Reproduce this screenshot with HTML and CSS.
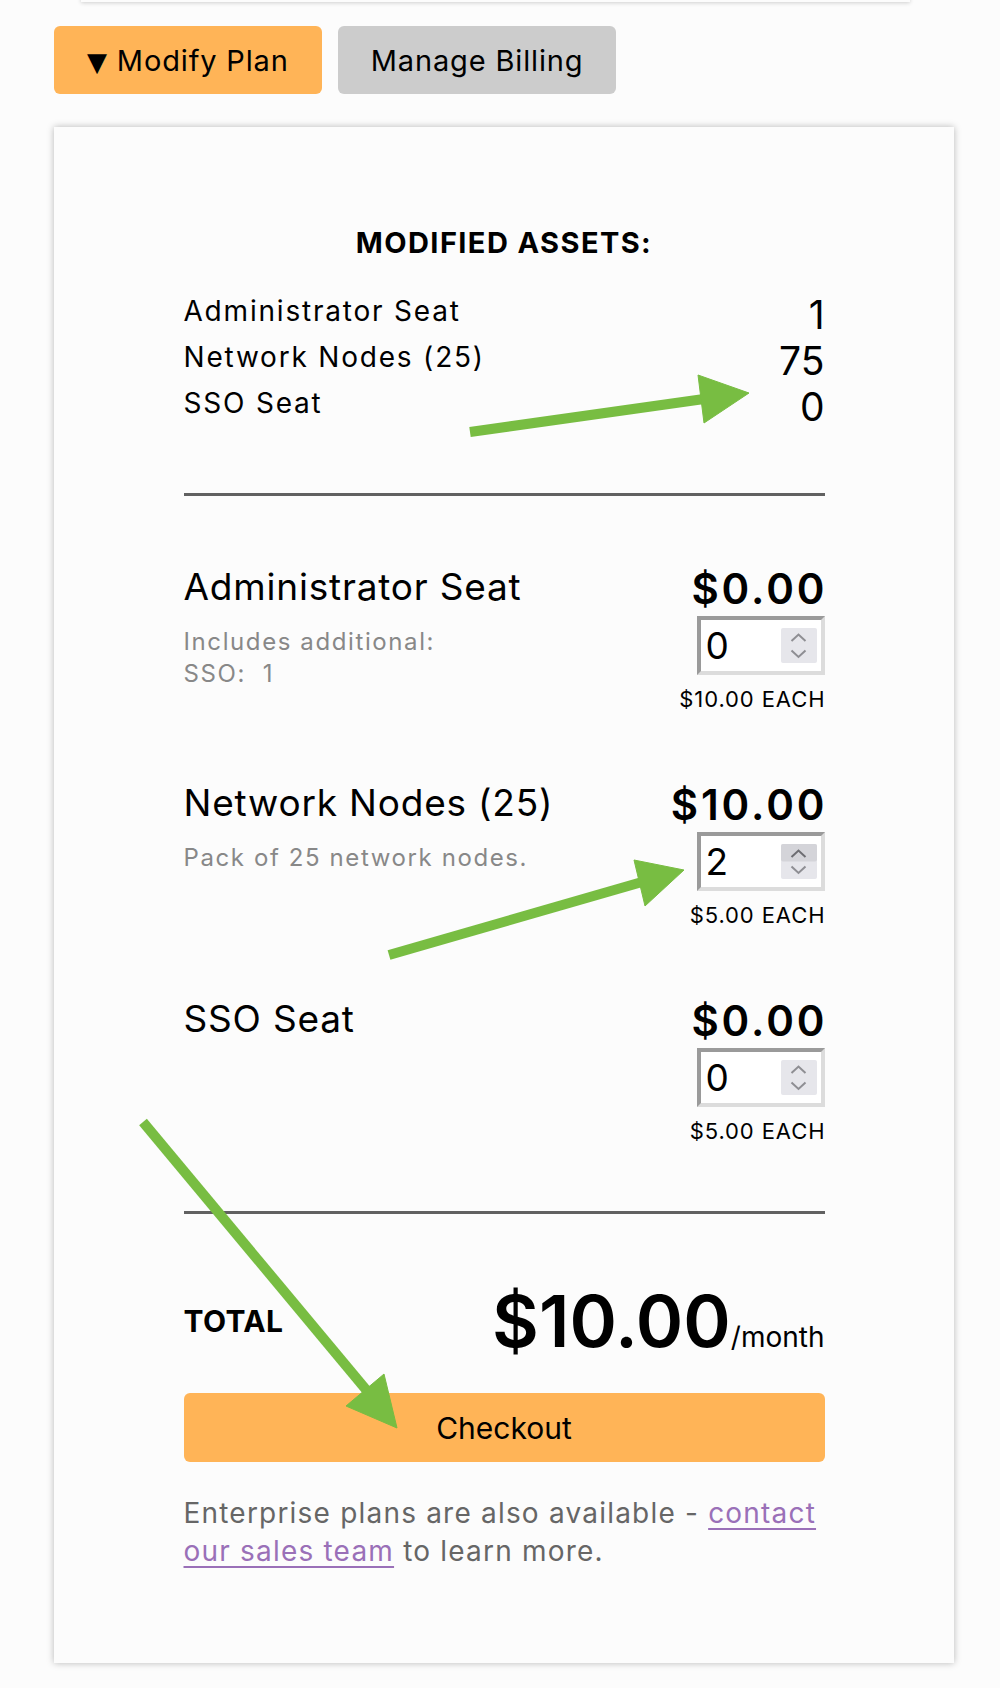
FILE: index.html
```html
<!DOCTYPE html>
<html lang="en">
<head>
<meta charset="utf-8">
<title>Modify Plan</title>
<link rel="stylesheet" href="styles.css">
</head>
<body>
<div class="prev-card"></div>
<div class="actions">
  <button class="btn btn-primary"><span class="caret">▼</span> Modify Plan</button>
  <button class="btn btn-secondary">Manage Billing</button>
</div>
<section class="card">
  <div class="inner">
    <h2 class="assets-title">MODIFIED ASSETS:</h2>
    <div class="assets">
      <div class="asset-row"><span class="asset-name">Administrator Seat</span><span class="asset-qty">1</span></div>
      <div class="asset-row"><span class="asset-name">Network Nodes (25)</span><span class="asset-qty">75</span></div>
      <div class="asset-row"><span class="asset-name">SSO Seat</span><span class="asset-qty">0</span></div>
    </div>
    <div class="rule"></div>
    <div class="items">
      <div class="item">
        <div class="item-info">
          <h3 class="item-title">Administrator Seat</h3>
          <p class="item-desc">Includes additional:<br>SSO:&nbsp; 1</p>
        </div>
        <div class="item-price">
          <div class="price">$0.00</div>
          <div class="qty-field">
            <span class="qty-value">0</span>
            <svg class="spinner" width="36" height="35" viewBox="0 0 36 35"><rect width="36" height="35" rx="2" fill="#e6e6eb"/><path d="M10.5 13 L17.5 6.5 L24.5 13 M10.5 22.5 L17.5 29 L24.5 22.5" fill="none" stroke="#8e8e93" stroke-width="2"/></svg>
          </div>
          <div class="each">$10.00 EACH</div>
        </div>
      </div>
      <div class="item">
        <div class="item-info">
          <h3 class="item-title">Network Nodes (25)</h3>
          <p class="item-desc">Pack of 25 network nodes.</p>
        </div>
        <div class="item-price">
          <div class="price">$10.00</div>
          <div class="qty-field">
            <span class="qty-value">2</span>
            <svg class="spinner" width="36" height="35" viewBox="0 0 36 35"><rect width="36" height="35" rx="2" fill="#e6e6eb"/><rect width="36" height="17.5" rx="2" fill="#d4d4d9"/><path d="M10.5 13 L17.5 6.5 L24.5 13" fill="none" stroke="#6d6d72" stroke-width="2"/><path d="M10.5 22.5 L17.5 29 L24.5 22.5" fill="none" stroke="#8e8e93" stroke-width="2"/></svg>
          </div>
          <div class="each">$5.00 EACH</div>
        </div>
      </div>
      <div class="item">
        <div class="item-info">
          <h3 class="item-title">SSO Seat</h3>
        </div>
        <div class="item-price">
          <div class="price">$0.00</div>
          <div class="qty-field">
            <span class="qty-value">0</span>
            <svg class="spinner" width="36" height="35" viewBox="0 0 36 35"><rect width="36" height="35" rx="2" fill="#e6e6eb"/><path d="M10.5 13 L17.5 6.5 L24.5 13 M10.5 22.5 L17.5 29 L24.5 22.5" fill="none" stroke="#8e8e93" stroke-width="2"/></svg>
          </div>
          <div class="each">$5.00 EACH</div>
        </div>
      </div>
    </div>
    <div class="rule"></div>
    <div class="total-row">
      <span class="total-label">TOTAL</span>
      <span class="total-amount">$10.00<span class="per">/month</span></span>
    </div>
    <button class="checkout">Checkout</button>
    <p class="note">Enterprise plans are also available - <a href="#">contact our sales team</a> to learn more.</p>
  </div>
</section>
<svg class="annotations" width="1000" height="1688" viewBox="0 0 1000 1688">
  <g fill="#78bd42" stroke="#78bd42">
    <line x1="470" y1="432" x2="704" y2="399" stroke-width="10"/>
    <polygon points="698,375 749,393 704,423" stroke-width="1"/>
    <line x1="389" y1="955" x2="642" y2="882" stroke-width="10"/>
    <polygon points="634,860 684,870 645,906" stroke-width="1"/>
    <line x1="143" y1="1122" x2="368" y2="1392" stroke-width="10"/>
    <polygon points="346,1406 397,1428 384,1374" stroke-width="1"/>
  </g>
</svg>
</body>
</html>
```

FILE: styles.css
```css
html, body {
  margin: 0;
  padding: 0;
}

body {
  position: relative;
  min-height: 1688px;
  background: #fcfcfc;
  color: #000;
  font-family: Inter, "Noto Sans", "Liberation Sans", sans-serif;
}

.prev-card {
  height: 40px;
  margin: -38px 90px 0 81px;
  background: #fcfcfc;
  box-shadow: 0 1px 4px rgba(0, 0, 0, 0.18);
}

.actions {
  display: flex;
  gap: 16px;
  margin: 24px 0 0 54px;
}

.btn {
  height: 68px;
  border: 0;
  border-radius: 6px;
  padding: 0 33px;
  font-family: inherit;
  font-size: 29px;
  letter-spacing: 0.85px;
  color: #000;
}

.btn-primary {
  background: #ffb457;
}

.btn-secondary {
  background: #cccccc;
  padding: 0 33px;
}

.caret {
  font-family: "DejaVu Sans", sans-serif;
  font-size: 26px;
}

.card {
  width: 900px;
  margin: 33px 0 0 54px;
  padding: 98px 0 93px;
  box-sizing: border-box;
  background: #fcfcfc;
  box-shadow: 0 0 7px rgba(0, 0, 0, 0.28);
}

.inner {
  width: 641px;
  margin: 0 auto;
}

.assets-title {
  margin: 0;
  text-align: center;
  font-size: 29px;
  line-height: 36px;
  font-weight: 700;
  letter-spacing: 1.4px;
}

.assets {
  margin-top: 27px;
}

.asset-row {
  display: flex;
  justify-content: space-between;
  align-items: flex-start;
  height: 46px;
}

.asset-name {
  font-size: 28px;
  line-height: 46px;
  letter-spacing: 1.8px;
}

.asset-qty {
  font-size: 39px;
  line-height: 46px;
  margin-top: 4px;
}

.rule {
  height: 3px;
  background: #616161;
}

.assets + .rule {
  margin-top: 67px;
}

.items {
  display: flex;
  flex-direction: column;
  gap: 66px;
  padding: 67px 0 66px;
}

.item {
  display: flex;
  justify-content: space-between;
  align-items: flex-start;
}

.item-title {
  margin: 0;
  font-size: 37px;
  line-height: 48px;
  font-weight: 400;
  letter-spacing: 0.8px;
}

.item-desc {
  margin: 15px 0 0;
  font-size: 24px;
  line-height: 32px;
  letter-spacing: 1.6px;
  color: #888888;
}

.item-price {
  display: flex;
  flex-direction: column;
  align-items: flex-end;
}

.price {
  padding-top: 2px;
  font-size: 42px;
  line-height: 48px;
  font-weight: 600;
  letter-spacing: 2.9px;
  margin-right: -2.9px;
}

.qty-field {
  display: flex;
  align-items: flex-start;
  justify-content: space-between;
  width: 128px;
  height: 59px;
  margin-top: 3px;
  box-sizing: border-box;
  border-style: solid;
  border-width: 4px;
  border-color: #9a9a9a #dcdcdc #dcdcdc #9a9a9a;
  background: #fff;
  padding: 8px 4px 0 5px;
}

.qty-value {
  font-size: 37px;
  line-height: 40px;
  margin-top: -2px;
}

.spinner {
  display: block;
}

.each {
  margin-top: 10px;
  font-size: 22px;
  line-height: 28px;
  letter-spacing: 0.9px;
  margin-right: -0.9px;
}

.total-row {
  display: flex;
  justify-content: space-between;
  align-items: center;
  margin-top: 67px;
}

.total-label {
  font-size: 30px;
  line-height: 36px;
  font-weight: 700;
  letter-spacing: 0.4px;
}

.total-amount {
  font-size: 72px;
  line-height: 80px;
  font-weight: 600;
  margin-left: 6px;
}

.per {
  font-size: 28px;
  line-height: 1;
  font-weight: 400;
}

.checkout {
  display: block;
  width: 100%;
  height: 69px;
  margin-top: 32px;
  border: 0;
  border-radius: 6px;
  background: #ffb457;
  font-family: inherit;
  font-size: 30px;
  color: #000;
}

.note {
  margin: 32px 0 0;
  font-size: 28px;
  line-height: 38px;
  letter-spacing: 1.2px;
  color: #666666;
}

.note a {
  color: #9a70b8;
  text-decoration-thickness: 2px;
  text-underline-offset: 5px;
}

.annotations {
  position: absolute;
  top: 0;
  left: 0;
  pointer-events: none;
}
```
